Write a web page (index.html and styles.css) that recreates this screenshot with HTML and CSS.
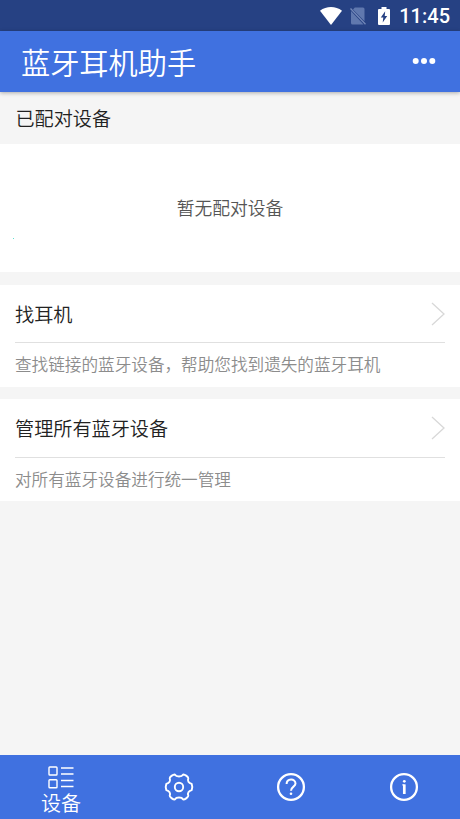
FILE: index.html
```html
<!DOCTYPE html>
<html lang="zh-CN">
<head>
<meta charset="utf-8">
<title>蓝牙耳机助手</title>
<link rel="stylesheet" href="styles.css">
</head>
<body>
<div class="app">
  <div class="status">
    <svg class="wifi" width="22" height="18" viewBox="0 0 22 18"><path d="M0 3.800C6.400-1.200 15.600-1.200 22 3.800L11 18Z" fill="#fff"/></svg>
    <svg class="sim" width="16" height="18" viewBox="0 0 16 18"><path d="M4.800 .5H13Q14.500 .5 14.500 2V14.200L3 2.500ZM1 4L13.500 17.500H2.500Q1 17.500 1 16Z" fill="#6078ae"/><path d="M.5 1.500L15.500 17.300" stroke="#7388b8" stroke-width="1.300"/></svg>
    <svg class="battery" width="12" height="18" viewBox="0 0 12 18"><path d="M3.500 0H8.500V2H11Q12 2 12 3V17Q12 18 11 18H1Q0 18 0 17V3Q0 2 1 2H3.500Z" fill="#fff"/><path d="M7.200 4.200L2.800 10.500H5.300L4.700 15.500L9.200 8.900H6.700Z" fill="#264183"/></svg>
    <span class="clock">11:45</span>
  </div>
  <header class="header">
    <h1 class="title">蓝牙耳机助手</h1>
    <svg class="more" width="24" height="8" viewBox="0 0 24 8" fill="#fff"><circle cx="3.700" cy="4" r="3"/><circle cx="12" cy="4" r="3"/><circle cx="20.300" cy="4" r="3"/></svg>
  </header>
  <main class="content">
    <h2 class="section">已配对设备</h2>
    <div class="empty">暂无配对设备</div>
    <section class="card">
      <div class="row"><span>找耳机</span><svg width="14" height="24" viewBox="0 0 14 24"><path d="M1 1L13 12L1 23" fill="none" stroke="#d8d8d8" stroke-width="1.300"/></svg></div>
      <p class="desc">查找链接的蓝牙设备，帮助您找到遗失的蓝牙耳机</p>
    </section>
    <section class="card">
      <div class="row"><span>管理所有蓝牙设备</span><svg width="14" height="24" viewBox="0 0 14 24"><path d="M1 1L13 12L1 23" fill="none" stroke="#d8d8d8" stroke-width="1.300"/></svg></div>
      <p class="desc">对所有蓝牙设备进行统一管理</p>
    </section>
  </main>
  <nav class="nav">
    <div class="tab tab-active">
      <svg width="26" height="23" viewBox="0 0 26 23" fill="none" stroke="#fff" stroke-width="1.400"><rect x="1" y="1" width="8" height="8" rx=".8"/><rect x="1" y="13.700" width="8" height="8" rx=".8"/><path d="M13 2H25.500M13 8H25.500M13 14.500H25.500M13 20.500H25.500"/></svg>
      <span class="label">设备</span>
    </div>
    <div class="tab">
      <svg width="30" height="30" viewBox="-15 -15 30 30" fill="none" stroke="#fff" stroke-width="1.900" stroke-linejoin="round"><path d="M12.700 3.100C9.600 4 8.200 6 9.300 8.700C9.500 10 6 12.600 4.200 12.500C2.600 9.900-2.600 9.900-4.200 12.500C-6 12.600-9.500 10-9.300 8.700C-8.200 6-9.600 4-12.700 3.100C-13.300 1.500-13.300-1.500-12.700-3.100C-9.600-4-8.200-6-9.300-8.700C-9.500-10-6-12.600-4.200-12.500C-2.600-9.900 2.600-9.900 4.200-12.500C6-12.600 9.500-10 9.300-8.700C8.200-6 9.600-4 12.700-3.100C13.300-1.500 13.300 1.500 12.700 3.100Z"/><circle r="4.200"/></svg>
    </div>
    <div class="tab">
      <svg width="30" height="30" viewBox="-15 -15 30 30" fill="none" stroke="#fff" stroke-width="2.300"><circle r="12.900"/><path d="M-4.400-2.900C-4.400-8.800 4.500-8.800 4.500-3.400C4.500-.3 0-.3 0 3.800" stroke-width="2"/><circle cy="6.800" r="1.300" fill="#fff" stroke="none"/></svg>
    </div>
    <div class="tab tab-info">
      <svg width="30" height="30" viewBox="-15 -15 30 30" fill="none" stroke="#fff" stroke-width="2.300"><circle r="12.900"/><path d="M.3-2.600V7" stroke-width="2.700"/><path d="M-1.800-2.100H.5" stroke-width="1"/><circle cx=".3" cy="-5.700" r="1.400" fill="#fff" stroke="none"/></svg>
    </div>
  </nav>
</div>
</body>
</html>
```
FILE: styles.css
```css
* { box-sizing: border-box; }
body {
  margin: 0;
  font-family: "Noto Sans CJK SC", sans-serif;
  font-weight: 350;
  background: #f5f5f5;
}
h1, h2, p { margin: 0; font-weight: 350; }
svg { display: block; flex: none; }
.app { display: flex; flex-direction: column; height: 819px; }
.status {
  height: 31px;
  flex: none;
  display: flex;
  align-items: center;
  justify-content: flex-end;
  padding-right: 10px;
  background: #264183;
}
.sim { margin-left: 8px; }
.battery { margin-left: 12px; }
.clock {
  margin-left: 9px;
  padding-top: 2px;
  font: 500 20px/31px Roboto, sans-serif;
  color: #fff;
}
.header {
  height: 61px;
  flex: none;
  display: flex;
  align-items: center;
  justify-content: space-between;
  padding: 0 24px 0 21px;
  background: #4071e0;
  box-shadow: 0 1px 4px rgba(0, 0, 0, .3);
  z-index: 1;
}
.title { font-size: 29.2px; line-height: 61px; color: #fff; }
.more { margin-bottom: 2px; }
.content { flex: 1; }
.section {
  height: 52px;
  padding-left: 15.5px;
  font-size: 19.1px;
  line-height: 52px;
  color: #222;
}
.empty {
  position: relative;
  height: 128px;
  background: #fff;
  text-align: center;
  font-size: 17.8px;
  line-height: 127px;
  color: #555;
}
.empty::before {
  content: "";
  position: absolute;
  left: 13px;
  top: 94px;
  width: 1px;
  height: 1px;
  background: #5fe0d0;
}
.card {
  height: 102px;
  margin-top: 13px;
  padding: 0 15px;
  background: #fff;
}
.card + .card { margin-top: 12px; }
.row {
  height: 58px;
  display: flex;
  align-items: center;
  justify-content: space-between;
  border-bottom: 1px solid #e0e0e0;
  font-size: 19.15px;
  color: #222;
}
.card + .card .row { height: 59px; }
.desc { font-size: 16.62px; line-height: 43px; height: 43px; color: #8c8c8c; }
.nav {
  height: 64px;
  flex: none;
  display: grid;
  grid-template-columns: 122px 114px 110px 114px;
  background: #4071e0;
}
.tab { display: flex; align-items: center; justify-content: center; }
.tab-info { padding-left: 1px; }
.tab-active {
  flex-direction: column;
  justify-content: flex-start;
  padding-top: 11px;
}
.label { font-size: 20px; line-height: 28px; color: #fff; }
```
